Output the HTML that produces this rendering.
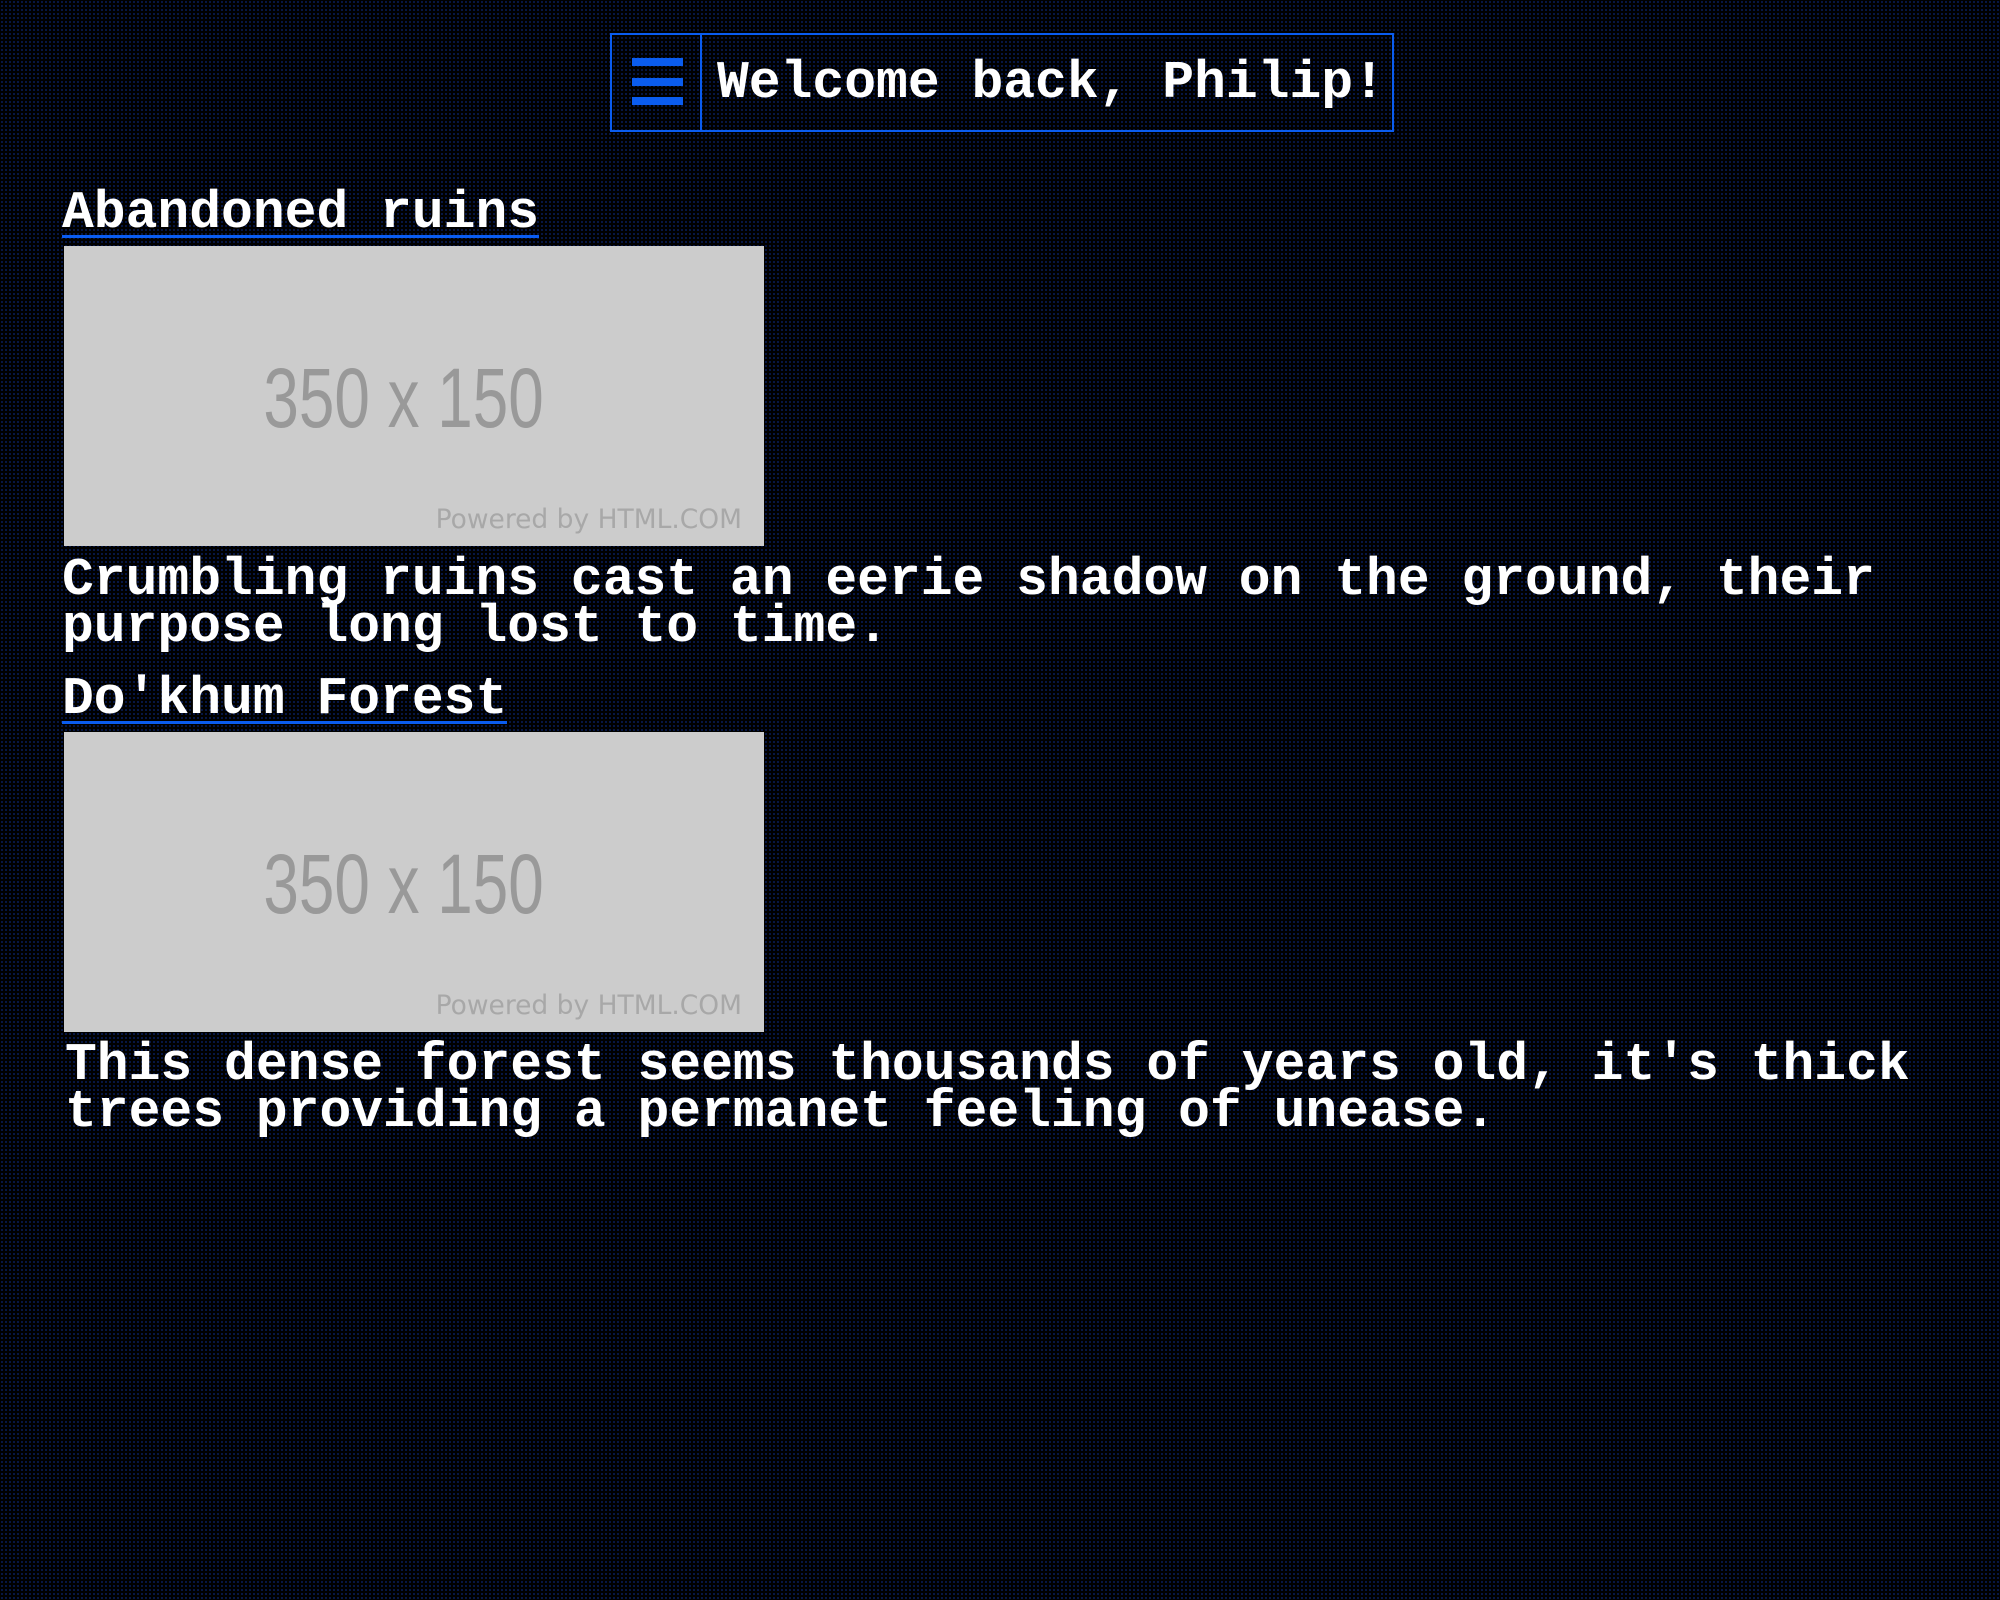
<!DOCTYPE html>
<html><head><meta charset="utf-8"><style>
html,body{margin:0;padding:0;}
body{width:2000px;height:1600px;position:relative;overflow:hidden;background-color:#000;
background-image:radial-gradient(circle,#0a2266 0.7px,transparent 1.1px);background-size:4px 4px;
font-family:"Liberation Mono",monospace;font-weight:bold;color:#fff;}
.t{position:absolute;white-space:pre;font-size:53px;line-height:47px;}
.hdr{position:absolute;left:610px;top:33px;width:780px;height:95px;border:2px solid #0a5cf0;}
.div{position:absolute;left:88px;top:0;width:2px;height:95px;background:#0a5cf0;}
.bar{position:absolute;left:20px;width:51px;height:8px;background:#0a5cf0;}
.h{position:absolute;font-size:53px;line-height:44px;white-space:pre;border-bottom:3px solid #0a5cf0;}
.img{position:absolute;left:64px;width:700px;height:300px;background:#cccccc;font-family:"Liberation Sans",sans-serif;font-weight:normal;}
.big{position:absolute;left:-8px;width:700px;top:104px;text-align:center;font-size:84px;color:#999;transform:scaleX(0.76);transform-origin:340px 0;}
.pw{position:absolute;right:22px;bottom:11px;font-size:26.5px;color:#a8a8a8;font-family:"DejaVu Sans",sans-serif;}
</style></head><body>
<div class="hdr"><div class="bar" style="top:23px"></div><div class="bar" style="top:43px"></div><div class="bar" style="top:62px"></div><div class="div"></div>
<div class="t" style="left:105px;top:25px;">Welcome back, Philip!</div></div>

<div class="h" style="left:62px;top:191px;">Abandoned ruins</div>
<div class="img" style="top:246px;"><div class="big">350 x 150</div><div class="pw">Powered by HTML.COM</div></div>
<div class="t" style="left:62px;top:557px;">Crumbling ruins cast an eerie shadow on the ground, their
purpose long lost to time.</div>

<div class="h" style="left:62px;top:677px;">Do'khum Forest</div>
<div class="img" style="top:732px;"><div class="big">350 x 150</div><div class="pw">Powered by HTML.COM</div></div>
<div class="t" style="left:65px;top:1042px;">This dense forest seems thousands of years old, it's thick
trees providing a permanet feeling of unease.</div>
</body></html>
